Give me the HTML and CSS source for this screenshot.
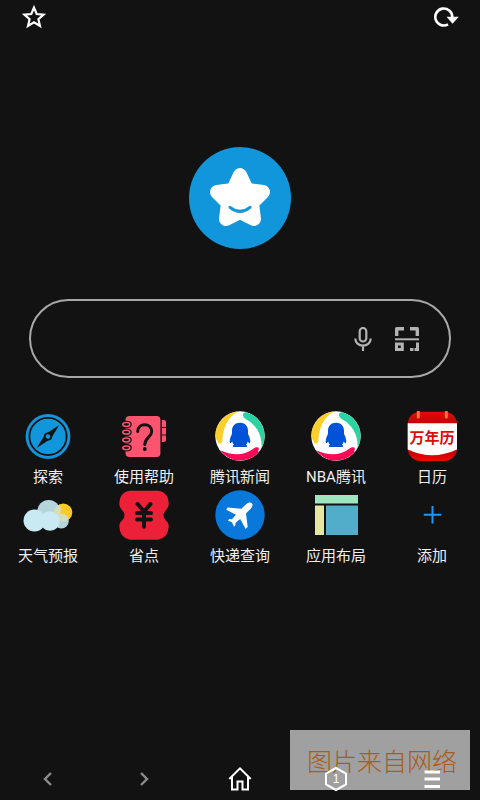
FILE: index.html
```html
<!DOCTYPE html>
<html lang="zh-CN">
<head>
<meta charset="utf-8">
<meta name="viewport" content="width=device-width, initial-scale=1">
<title>主页</title>
<link rel="stylesheet" href="styles.css">
</head>
<body>
<header class="topbar">
  <button class="icon-btn" type="button" aria-label="收藏">
    <svg width="24" height="24" viewBox="0 0 24 24" fill="none" stroke="#fff" stroke-width="2.200"><path d="M12 2.600l2.700 6.400 7 .6-5.300 4.600 1.600 6.800-6-3.600L6 21l1.600-6.800L2.300 9.600l7-.6z"/></svg>
  </button>
  <button class="icon-btn" type="button" aria-label="刷新">
    <svg width="25" height="24" viewBox="0 0 25 24"><path d="M18.300 12A8.500 8.500 0 1 0 14 19.400" fill="none" stroke="#fff" stroke-width="2.600"/><path d="M12.600 11.700H24.800L18.500 18.800z" fill="#fff"/></svg>
  </button>
</header>

<main class="home">
  <svg class="logo" width="102" height="102" viewBox="0 0 102 102" aria-hidden="true">
    <circle cx="51" cy="51" r="51" fill="#1296db"/>
    <path d="M51 28L58 43 74 45 63 56 65 72 51 65 37 72 39 56 28 45 44 43z" fill="#fff" stroke="#fff" stroke-width="14" stroke-linejoin="round"/>
    <path d="M41 60.300Q51 68.500 61 60.300" fill="none" stroke="#1296db" stroke-width="3" stroke-linecap="round"/>
  </svg>

  <form class="search">
    <input class="search-input" type="text" aria-label="搜索">
    <button class="icon-btn" type="button" aria-label="语音">
      <svg width="24" height="24" viewBox="0 0 24 24" fill="none" stroke="#b3b3b3" stroke-width="2.200"><rect x="8.700" y="1" width="6.600" height="13.500" rx="3.300"/><path d="M4.300 11.500a7.700 7.200 0 0 0 15.400 0M12 18.700V24"/></svg>
    </button>
    <button class="icon-btn" type="button" aria-label="扫码">
      <svg width="24" height="24" viewBox="0 0 24 24" fill="none" stroke="#b3b3b3"><path d="M1.700 9V1.700H9M15 1.700h7.300V9" stroke-width="3.400" stroke-linejoin="round"/><path d="M0 12.300h24" stroke-width="2"/><rect x="1.500" y="17" width="5.800" height="5.500" stroke-width="3"/><path d="M22.500 15.500V22.500H19.500" stroke-width="3"/><path d="M15 22.500h3.500" stroke-width="3"/></svg>
    </button>
  </form>

  <nav class="apps" aria-label="应用">
    <a class="app" href="#">
      <svg width="50" height="50" viewBox="0 0 50 50"><circle cx="25" cy="25.500" r="22.400" fill="#1296db"/><circle cx="25" cy="25.500" r="18.600" fill="none" stroke="#121212" stroke-width="1.800"/><path d="M36.300 14L28 27.500 13.700 37 22 23.500z" fill="#121212"/><circle cx="25" cy="25.500" r="3.200" fill="#1296db" stroke="#121212" stroke-width="1.800"/></svg>
      <span>探索</span>
    </a>
    <a class="app" href="#">
      <svg width="50" height="50" viewBox="0 0 50 50"><path d="M42 9h3q2 0 2 2v18q0 2-2 2h-3z" fill="#ff5470"/><path d="M43 16.500h4M43 24h4" stroke="#121212"/><rect x="6.500" y="5" width="35" height="41" rx="4" fill="#ff5470"/><path d="M42.300 7v37" stroke="#121212"/><g fill="#ff5470" stroke="#121212" stroke-width="3"><ellipse cx="7.500" cy="13.500" rx="3.800" ry="2.200"/><ellipse cx="7.500" cy="21.200" rx="3.800" ry="2.200"/><ellipse cx="7.500" cy="29" rx="3.800" ry="2.200"/><ellipse cx="7.500" cy="36.800" rx="3.800" ry="2.200"/></g><g fill="#121212" stroke="#ff5470" stroke-width="1.500"><ellipse cx="7.300" cy="13.500" rx="3.500" ry="1.900"/><ellipse cx="7.300" cy="21.200" rx="3.500" ry="1.900"/><ellipse cx="7.300" cy="29" rx="3.500" ry="1.900"/><ellipse cx="7.300" cy="36.800" rx="3.500" ry="1.900"/></g><path d="M18.700 20.500C18.700 11.500 32.700 11.500 32.700 20.500 32.700 26 25.800 26.500 25.800 33.500" fill="none" stroke="#121212" stroke-width="3" stroke-linecap="round"/><circle cx="25.800" cy="38" r="1.900" fill="#121212"/></svg>
      <span>使用帮助</span>
    </a>
    <a class="app" href="#">
      <svg width="50" height="50" viewBox="0 0 50 50"><circle cx="25" cy="25" r="24.700" fill="#fff"/><path d="M5 32.500Q2.800 32.500 2.300 30 .3 26 .3 25A24.700 24.700 0 0 1 23 .4C13 6 8 16 7.400 29.500Q7.500 32.500 5 32.500z" fill="#fcd02c"/><path d="M28 4.200Q28 1 32 1.400A24.700 24.700 0 0 1 46.500 37C47.500 25 42 14 30.200 7.700Q28 6.500 28 4.200z" fill="#2ad3a1"/><path d="M43.300 39.500Q45 36.300 41.800 36.300 40.300 36.200 39 37.300C29 45 18 45 5 39.300A24.700 24.700 0 0 0 43.300 41.500z" fill="#fb0a55"/><path d="M25 11.700c5 0 8 3.500 8 8 0 2-.2 2.700.5 4.300 1.500 3 2.300 6 1.500 8-.7.600-1.700-.6-2.300-1.500-.3 1.600-.9 2.500-1.700 3.300 1.700.7 1.700 2.300 0 2.300H19c-1.700 0-1.700-1.600 0-2.300-.8-.8-1.400-1.700-1.700-3.300-.6.900-1.600 2.100-2.300 1.500-.8-2 0-5 1.500-8 .7-1.600.5-2.300.5-4.300 0-4.500 3-8 8-8z" fill="#0052d9"/></svg>
      <span>腾讯新闻</span>
    </a>
    <a class="app" href="#">
      <svg width="50" height="50" viewBox="0 0 50 50"><circle cx="25" cy="25" r="24.700" fill="#fff"/><path d="M5 32.500Q2.800 32.500 2.300 30 .3 26 .3 25A24.700 24.700 0 0 1 23 .4C13 6 8 16 7.400 29.500Q7.500 32.500 5 32.500z" fill="#fcd02c"/><path d="M28 4.200Q28 1 32 1.400A24.700 24.700 0 0 1 46.500 37C47.500 25 42 14 30.200 7.700Q28 6.500 28 4.200z" fill="#2ad3a1"/><path d="M43.300 39.500Q45 36.300 41.800 36.300 40.300 36.200 39 37.300C29 45 18 45 5 39.300A24.700 24.700 0 0 0 43.300 41.500z" fill="#fb0a55"/><path d="M25 11.700c5 0 8 3.500 8 8 0 2-.2 2.700.5 4.300 1.500 3 2.300 6 1.500 8-.7.600-1.700-.6-2.300-1.500-.3 1.600-.9 2.500-1.700 3.300 1.700.7 1.700 2.300 0 2.300H19c-1.700 0-1.700-1.600 0-2.300-.8-.8-1.400-1.700-1.700-3.300-.6.900-1.600 2.100-2.300 1.500-.8-2 0-5 1.500-8 .7-1.600.5-2.300.5-4.300 0-4.500 3-8 8-8z" fill="#0052d9"/></svg>
      <span>NBA腾讯</span>
    </a>
    <a class="app" href="#">
      <svg width="50" height="50" viewBox="0 0 50 50"><defs><linearGradient id="cal" x1="0" y1="0" x2="0" y2="1"><stop offset="0" stop-color="#e60a0a"/><stop offset=".24" stop-color="#bd0505"/><stop offset=".75" stop-color="#b50000"/><stop offset="1" stop-color="#f20808"/></linearGradient></defs><rect x=".7" y=".7" width="49.300" height="49.300" rx="12.500" fill="url(#cal)"/><path d="M.7 12.300H50V38.500Q25 50 .7 38.500z" fill="#fff"/><path d="M11.300 1v5M39.300 1v5" stroke="#f27a35" stroke-width="3" stroke-linecap="round"/><text class="cal-text" x="25" y="32" text-anchor="middle">万年历</text></svg>
      <span>日历</span>
    </a>
    <a class="app" href="#">
      <svg width="50" height="50" viewBox="0 0 50 50"><circle cx="40.300" cy="22.500" r="9" fill="#fccb25"/><circle cx="25.700" cy="21.500" r="11.500" fill="#b5d4dc"/><circle cx="38.300" cy="31" r="7.500" fill="#b5d4dc"/><path d="M31.300 22.500A9 9 0 0 1 36.500 14.400 11.500 11.500 0 0 1 36.800 24 7.500 7.500 0 0 1 45.600 29.300 9 9 0 0 1 31.300 22.500z" fill="#d7dfb9"/><circle cx="11.500" cy="30.500" r="11" fill="#c9eaf3"/><circle cx="27" cy="31" r="9.800" fill="#c9eaf3"/></svg>
      <span>天气预报</span>
    </a>
    <a class="app" href="#">
      <svg width="50" height="50" viewBox="0 0 50 50"><path d="M11 .7H39Q49.500 2 49.700 14 49.700 18 46.500 20.500 42.500 25.300 46.500 30 49.700 32.500 49.700 36 49.500 48 39 49.700H11Q.5 48 .3 36 .3 32.500 3.500 30 7.500 25.300 3.500 20.500.3 18 .3 14 .5 2 11 .7z" fill="#ec2036"/><path d="M18.500 14L25 21.500 31.500 14M18 23h14M18 29.500h14M25 22v14.800" fill="none" stroke="#121212" stroke-width="4" stroke-linecap="round" stroke-linejoin="round"/></svg>
      <span>省点</span>
    </a>
    <a class="app" href="#">
      <svg width="50" height="50" viewBox="0 0 50 50"><circle cx="25" cy="25" r="24.700" fill="#0878da"/><path d="M36.800 13.200c1.400 1.500.6 3.800-1.100 5.500L31 23.400l1.700 13.300-2 2.200-5.500-10-4.800 4.200.1 2.200-1.500 1.400-1.900-4.300-4.200-1.800 1.300-1.600 2.700.2 4-4.400-9.700-5.100 1.500-2.200 13.600 1.300 4.800-4.500c2-1.800 4.300-2.300 5.700-1.100z" fill="#fff"/></svg>
      <span>快递查询</span>
    </a>
    <a class="app" href="#">
      <svg width="50" height="50" viewBox="0 0 50 50"><path d="M4 5h43v8.500H4z" fill="#9fe5c0"/><path d="M4 15.500h9v29.500H4z" fill="#e3e7a1"/><path d="M15 15.500h32v29.500H15z" fill="#51adca"/></svg>
      <span>应用布局</span>
    </a>
    <a class="app" href="#">
      <svg width="50" height="50" viewBox="0 0 50 50"><path d="M25.500 16v17.500M16.800 24.700h17.500" stroke="#2196f3" stroke-width="2"/></svg>
      <span>添加</span>
    </a>
  </nav>
</main>

<div class="watermark">图片来自网络</div>

<footer class="toolbar">
  <button class="icon-btn" type="button" aria-label="后退"><svg width="26" height="26" viewBox="0 0 26 26"><path d="M16 7l-6 6 6 6" fill="none" stroke="#8c8c8c" stroke-width="2.400"/></svg></button>
  <button class="icon-btn" type="button" aria-label="前进"><svg width="26" height="26" viewBox="0 0 26 26"><path d="M10 7l6 6-6 6" fill="none" stroke="#8c8c8c" stroke-width="2.400"/></svg></button>
  <button class="icon-btn" type="button" aria-label="主页"><svg width="26" height="26" viewBox="0 0 26 26"><path d="M2.300 13L13 2.300 23.700 13M5 11v12.500h5.500v-8h5v8H21V11" fill="none" stroke="#fff" stroke-width="2"/></svg></button>
  <button class="icon-btn" type="button" aria-label="标签页"><svg width="26" height="26" viewBox="0 0 26 26"><path d="M13 2l10 5.500v11L13 24 3 18.500v-11z" fill="none" stroke="#fff" stroke-width="2"/><text class="tab-count" x="13" y="17" text-anchor="middle">1</text></svg></button>
  <button class="icon-btn" type="button" aria-label="菜单"><svg width="26" height="26" viewBox="0 0 26 26"><path d="M5.500 6h15.500M5.500 13h15.500M5.500 20.500h15.500" stroke="#fff" stroke-width="3"/></svg></button>
</footer>
</body>
</html>
```
FILE: styles.css
```css
* {
  box-sizing: border-box;
}

body {
  position: relative;
  display: flex;
  flex-direction: column;
  min-height: 100vh;
  margin: 0;
  background: #121212;
  color: #f0f0f0;
  font-family: Roboto, "Noto Sans CJK SC", sans-serif;
}

svg {
  display: block;
}

.icon-btn {
  padding: 0;
  border: 0;
  background: none;
  color: inherit;
  cursor: pointer;
}

.topbar {
  display: flex;
  justify-content: space-between;
  padding: 5px 21px 5px 22px;
}

.home {
  display: flex;
  flex: 1;
  flex-direction: column;
}

.logo {
  align-self: center;
  margin-top: 113px;
}

.search {
  display: flex;
  align-items: center;
  gap: 20px;
  height: 79px;
  margin: 50px 29px 0;
  padding: 0 30px;
  border: 2px solid #a8a8a8;
  border-radius: 40px;
}

.search-input {
  flex: 1;
  min-width: 0;
  height: 48px;
  padding: 0;
  border: 0;
  outline: 0;
  background: none;
  color: inherit;
  font: inherit;
}

.apps {
  display: grid;
  grid-template-columns: repeat(5, 1fr);
  row-gap: 2px;
  margin-top: 33px;
}

.app {
  display: flex;
  flex-direction: column;
  align-items: center;
  gap: 5px;
  color: inherit;
  font-size: 15px;
  line-height: 22px;
  text-decoration: none;
  white-space: nowrap;
}

.cal-text {
  fill: #e00a0a;
  font-size: 15px;
  font-weight: 700;
}

.toolbar {
  position: relative;
  display: grid;
  grid-template-columns: repeat(5, 1fr);
  justify-items: center;
  padding: 8px 0;
}

.tab-count {
  fill: #fff;
  font-size: 12px;
}

.watermark {
  position: absolute;
  right: 10px;
  bottom: 10px;
  padding: 0 13px 0 17px;
  background: #a0a0a0;
  color: #a85c18;
  font-family: "Noto Sans CJK SC", sans-serif;
  font-size: 25px;
  font-weight: 300;
  line-height: 60px;
}
```
